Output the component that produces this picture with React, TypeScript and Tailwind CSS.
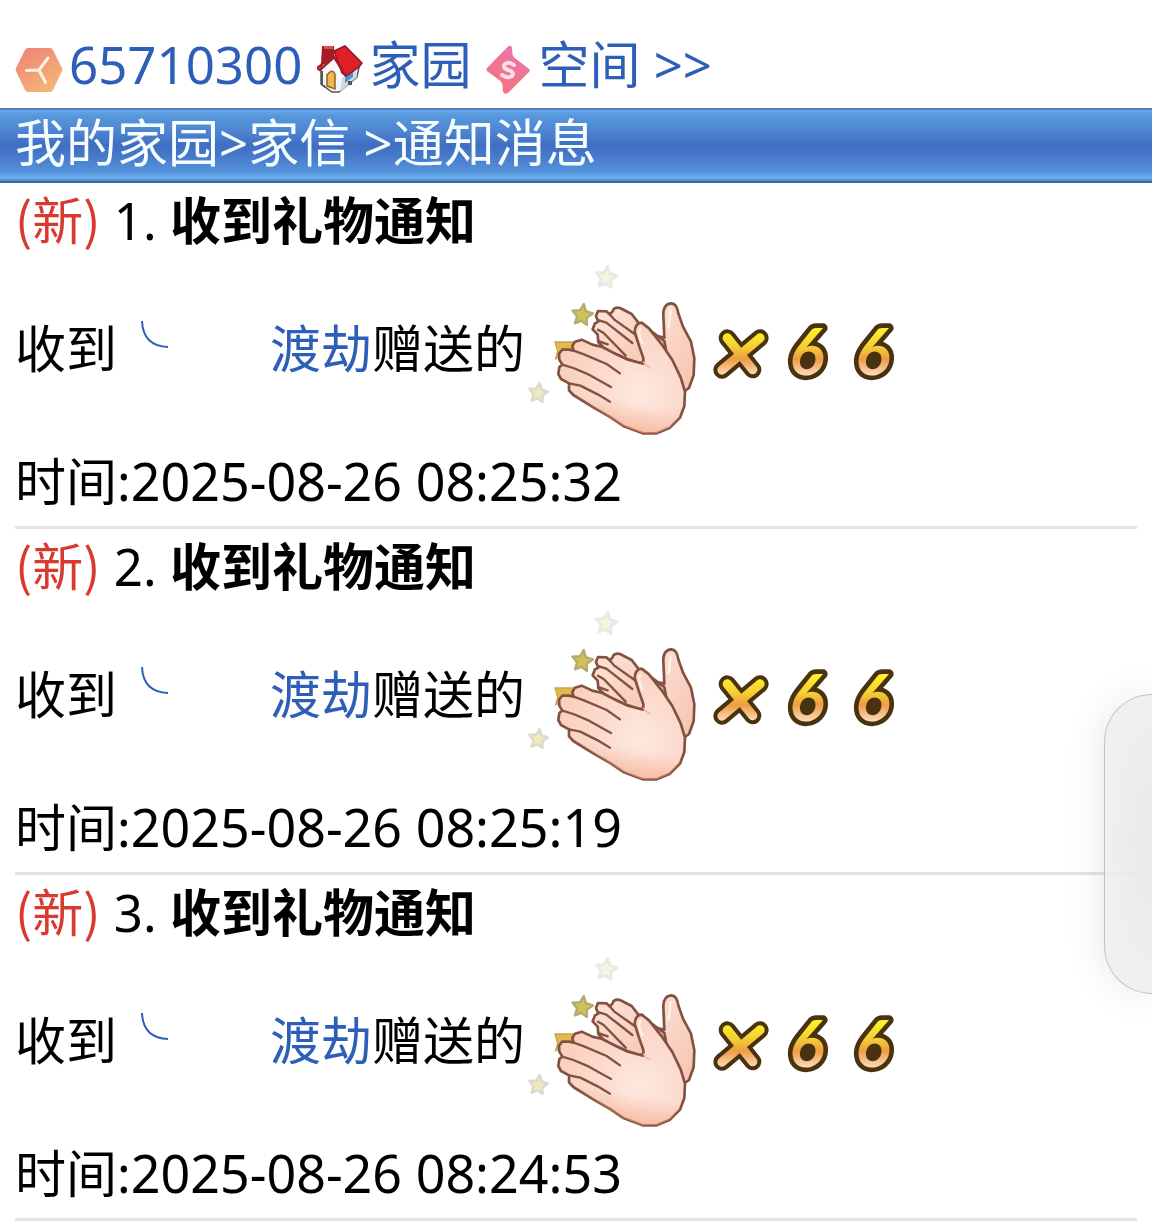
import { useId } from "react";

const notices = [
  { id: 1, time: "2025-08-26 08:25:32" },
  { id: 2, time: "2025-08-26 08:25:19" },
  { id: 3, time: "2025-08-26 08:24:53" },
];

function HexIcon() {
  return (
    <svg viewBox="0 0 48 60" className="h-[60px] w-12 shrink-0" aria-hidden="true">
      <defs>
        <linearGradient id="hex" x1="0" y1="0" x2="0.6" y2="1">
          <stop offset="0" stopColor="#ee8175" />
          <stop offset="1" stopColor="#f2b478" />
        </linearGradient>
      </defs>
      <path d="M13 14h22q2 0 3 2l9 18q1 2 0 3l-9 19q-1 2-3 2H13q-2 0-3-2L1 37q-1-1 0-3l9-18q1-2 3-2z" fill="url(#hex)" />
      <path d="M11.500 36.500 24 36 33 24M24 36 30.500 48.500" fill="none" stroke="#fff1e6" strokeWidth="3" strokeLinecap="round" strokeLinejoin="round" />
    </svg>
  );
}

function HouseIcon() {
  return (
    <svg viewBox="0 0 46 60" className="h-[60px] w-[46px] shrink-0" aria-hidden="true">
      <path d="M4 32 17 18 42 33 40 43 22 58 15 58 4 50z" fill="#f4f6fa" stroke="#555" strokeWidth="1.500" />
      <path d="M25 44 38 34 40 43 23 58z" fill="#d3d9e4" />
      <path d="M28 43 36 37v6l-8 6z" fill="#4a94cf" />
      <path d="M17 20 29 41 21 46z" fill="#fff" />
      <path d="M5 12h12v12l-9 6H4z" fill="#a71c28" />
      <path d="M7 12h9v3H7z" fill="#df4f50" />
      <path d="M17 17 28 12 45 29 42 33 29 42 25 39z" fill="#df2028" stroke="#8e1822" strokeWidth="1.500" />
      <path d="M17 17 3 32 0 34 3 36 17 23 29 42" fill="none" stroke="#a81d25" strokeWidth="2.500" />
      <path d="M10 41q5-7 8-1v15l-8-3z" fill="#efb84f" stroke="#986222" strokeWidth="1.500" />
      <path d="M4 37v14l4 3v-3H6V37zM31 51h4v-4h-4z" fill="#555" />
    </svg>
  );
}

function DiamondIcon() {
  return (
    <svg viewBox="0 0 46 60" className="h-[60px] w-[46px] shrink-0" aria-hidden="true">
      <defs>
        <linearGradient id="dia" x1="0.7" y1="0" x2="0.3" y2="1">
          <stop offset="0" stopColor="#e875ae" />
          <stop offset="1" stopColor="#f6737c" />
        </linearGradient>
      </defs>
      <path d="M22 12.500q3-2 4 1l.5 7q.5 2 3 4L43 35q2 1 0 3L22 59q-3 2-5-1l-.5-7q-.5-2-2-4L1 37q-1-1 0-3z" fill="url(#dia)" />
      <path d="M28 31q-5-4-9-1-3 4 3 6 7 2 4 6-4 3-10-1" fill="none" stroke="#ffdce6" strokeWidth="4" strokeLinecap="round" />
    </svg>
  );
}

const STAR = "M0-31 9-11 31-7 15 8 18 30 0 20-18 30-15 8-31-7-9-11z";

function ClapPicture() {
  const id = useId();
  const skin = `${id}skin`;
  const rear = `${id}rear`;
  const glow = `${id}glow`;
  return (
    <svg viewBox="45 36 525 534" className="h-[178px] w-[175px] shrink-0" role="img" aria-label="鼓掌">
      <defs>
        <radialGradient id={skin} gradientUnits="userSpaceOnUse" cx="390" cy="430" r="250">
          <stop offset="0" stopColor="#fde9e0" />
          <stop offset="0.4" stopColor="#fcddd1" />
          <stop offset="1" stopColor="#f9cfbd" />
        </radialGradient>
        <linearGradient id={rear} x1="0" y1="0" x2="1" y2="1">
          <stop offset="0" stopColor="#fce5da" />
          <stop offset="1" stopColor="#f7c3b0" />
        </linearGradient>
        <linearGradient id={glow} x1="0.6" y1="0" x2="0.4" y2="1">
          <stop offset="0.7" stopColor="#f3a586" stopOpacity="0" />
          <stop offset="1" stopColor="#f3a586" stopOpacity="0.7" />
        </linearGradient>
      </defs>
      <g strokeLinejoin="round">
        <path d={STAR} transform="translate(289 80) rotate(8)" fill="#f8f5dc" stroke="#e9e9e7" strokeWidth="9" />
        <path d={STAR} transform="translate(217 193) rotate(8)" fill="#cfc05c" stroke="#b3ab70" strokeWidth="7" />
        <path d={STAR} transform="translate(85 427) rotate(8) scale(.9)" fill="#eeeaba" stroke="#dcdbcc" strokeWidth="9" />
      </g>
      <path d="M135 276h58l-12 28-44 22 6-22z" fill="#e5b848" stroke="#c6a552" strokeWidth="4" />
      <g stroke="#835141" strokeWidth="8" strokeLinejoin="round" strokeLinecap="round">
        <path d="M463 263 460 195Q459 162 484 160 501 161 505 190L519 230 543 275 553 325 551 375 537 414 520 426 480 350 400 250z" fill={`url(#${rear})`} />
        <path d="M308 184Q310 170 330 174L365 192 385 218 425 245 463 273 470 310 390 340 345 325 284 297 265 276 263 254 248 238 255 220 265 215 258 198 264 183 289 184 299 193z" fill={`url(#${rear})`} />
        <path d="M267 211 289 218 367 279M264 239 281 249 347 317M299 193 312 208 378 255M268 274 293 283" fill="none" strokeWidth="7" />
        <path d="M400 341 400 324 388 290 374 246Q376 218 395 218L417 235 455 283 487 330 512 382 525 425 523 468 510 503 480 533 440 550 398 550 342 529 302 502 250 472 190 435 177 421 177 400 153 387 145 372 148 351 157 344 148 329 147 311 157 299 177 299 191 302 187 288 195 275 215 269 247 284 277 291 319 313 354 329z" fill={`url(#${skin})`} />
        <path d="M191 302 222 313 290 342 330 370M157 344 190 354 237 374 303 411M177 400 211 407 263 433 300 455" fill="none" strokeWidth="7" />
      </g>
      <path d="M400 341 400 324 388 290 374 246Q376 218 395 218L455 283 512 382 525 425 510 503 480 533 440 550 398 550 342 529 190 435 147 320 290 300z" fill={`url(#${glow})`} />
      <path d="M400 335Q408 350 422 353" fill="none" stroke="#efb9a6" strokeWidth="5" />
      <path d="M391 236Q382 250 397 279M482 181 476 232" fill="none" stroke="#fff2ea" strokeWidth="7" strokeLinecap="round" />
    </svg>
  );
}

function CountPicture() {
  const id = useId();
  const gold = `${id}gold`;
  return (
    <svg viewBox="36 -27 600 300" className="ml-3 h-[100px] w-[200px] shrink-0" role="img" aria-label="×66">
      <defs>
        <linearGradient id={gold} gradientUnits="userSpaceOnUse" x1="0" y1="60" x2="0" y2="205">
          <stop offset="0" stopColor="#fff02b" />
          <stop offset="0.35" stopColor="#f4cf35" />
          <stop offset="0.6" stopColor="#ee9c42" />
          <stop offset="1" stopColor="#ffe6d6" />
        </linearGradient>
      </defs>
      <g fill="none" strokeLinecap="round" strokeLinejoin="round">
        <path d="M82 84 158 179M180 84 66 180" stroke="#49330f" strokeWidth="52" />
        <path d="M82 84 158 179M180 84 66 180" stroke={`url(#${gold})`} strokeWidth="28" />
      </g>
      <g fill="#49330f">
        <ellipse cx="325" cy="152" rx="20" ry="22" />
        <ellipse cx="523" cy="152" rx="20" ry="22" />
      </g>
      <g
        fill={`url(#${gold})`}
        stroke="#49330f"
        strokeWidth="28"
        strokeLinejoin="round"
        className="[font-family:Lato,sans-serif] text-[196px] leading-none font-bold italic [paint-order:stroke]"
      >
        <text x="268" y="196">6</text>
        <text x="466" y="196">6</text>
      </g>
    </svg>
  );
}

function SenderArc() {
  return (
    <svg viewBox="0 0 153 76" className="h-[76px] w-[153px] shrink-0" aria-hidden="true">
      <path d="M25 11Q26 36 51 37" fill="none" stroke="#2d5fb8" strokeWidth="2" />
    </svg>
  );
}

function Notice({ id, time }: { id: number; time: string }) {
  return (
    <li className="border-b-[3px] border-[#e3e3e3]">
      <h2 className="pb-1.5 leading-[71px] font-normal">
        <span className="[font-family:'Noto_Sans_CJK_SC',sans-serif] text-[#d93a2f]">(新)</span> {id}. <b className="font-bold">收到礼物通知</b>
      </h2>
      <div className="flex items-center">
        <p className="flex items-center pb-1.5">
          <span>收到</span>
          <a href="#sender" className="flex items-center text-[#2d5fb8]">
            <SenderArc />
            渡劫
          </a>
          <span>赠送的</span>
        </p>
        <ClapPicture />
        <CountPicture />
      </div>
      <p className="pb-1 leading-[82px]">
        时间:<time className="text-[52px]">{time}</time>
      </p>
    </li>
  );
}

export default function App() {
  return (
    <div className="relative min-h-screen overflow-hidden bg-white [font-family:'Noto_Sans','Noto_Sans_CJK_SC',sans-serif] text-[51px] leading-[76px] whitespace-nowrap text-black">
      <header className="flex items-center gap-[15px] px-[15px] pt-5 leading-[88px] text-[#2d5fb8]">
        <a href="#profile" className="flex items-center gap-1.5">
          <HexIcon />
          65710300
        </a>
        <a href="#home" className="flex items-center gap-1.5">
          <HouseIcon />
          家园
        </a>
        <a href="#space" className="flex items-center gap-1.5">
          <DiamondIcon />
          空间 &gt;&gt;
        </a>
      </header>
      <nav className="border-t-2 border-b-2 border-t-[#4f80b9] border-b-[#41699f] bg-[linear-gradient(#67a8e6_0%,#5797dc_8%,#4f86d2_28%,#406ec2_50%,#4678ca_64%,#5695dc_88%,#69b0f1_95%,#5285c5_100%)] px-[15px] pb-1.5 leading-[65px] text-[#f4fdff]">
        <a href="#home">我的家园</a>&gt;<a href="#letters">家信</a> &gt;通知消息
      </nav>
      <main className="px-[15px]">
        <ul>
          {notices.map((n) => (
            <Notice key={n.id} id={n.id} time={n.time} />
          ))}
        </ul>
      </main>
      <button
        type="button"
        aria-label="侧边栏"
        className="absolute top-[694px] right-0 h-[300px] w-12 rounded-l-[48px] border border-r-0 border-[#c2c2c2] bg-[radial-gradient(ellipse_at_right,#e6e6e6e0_0%,#eeeeeee0_75%)] shadow-[0_0_40px_rgba(0,0,0,0.10)]"
      />
    </div>
  );
}
